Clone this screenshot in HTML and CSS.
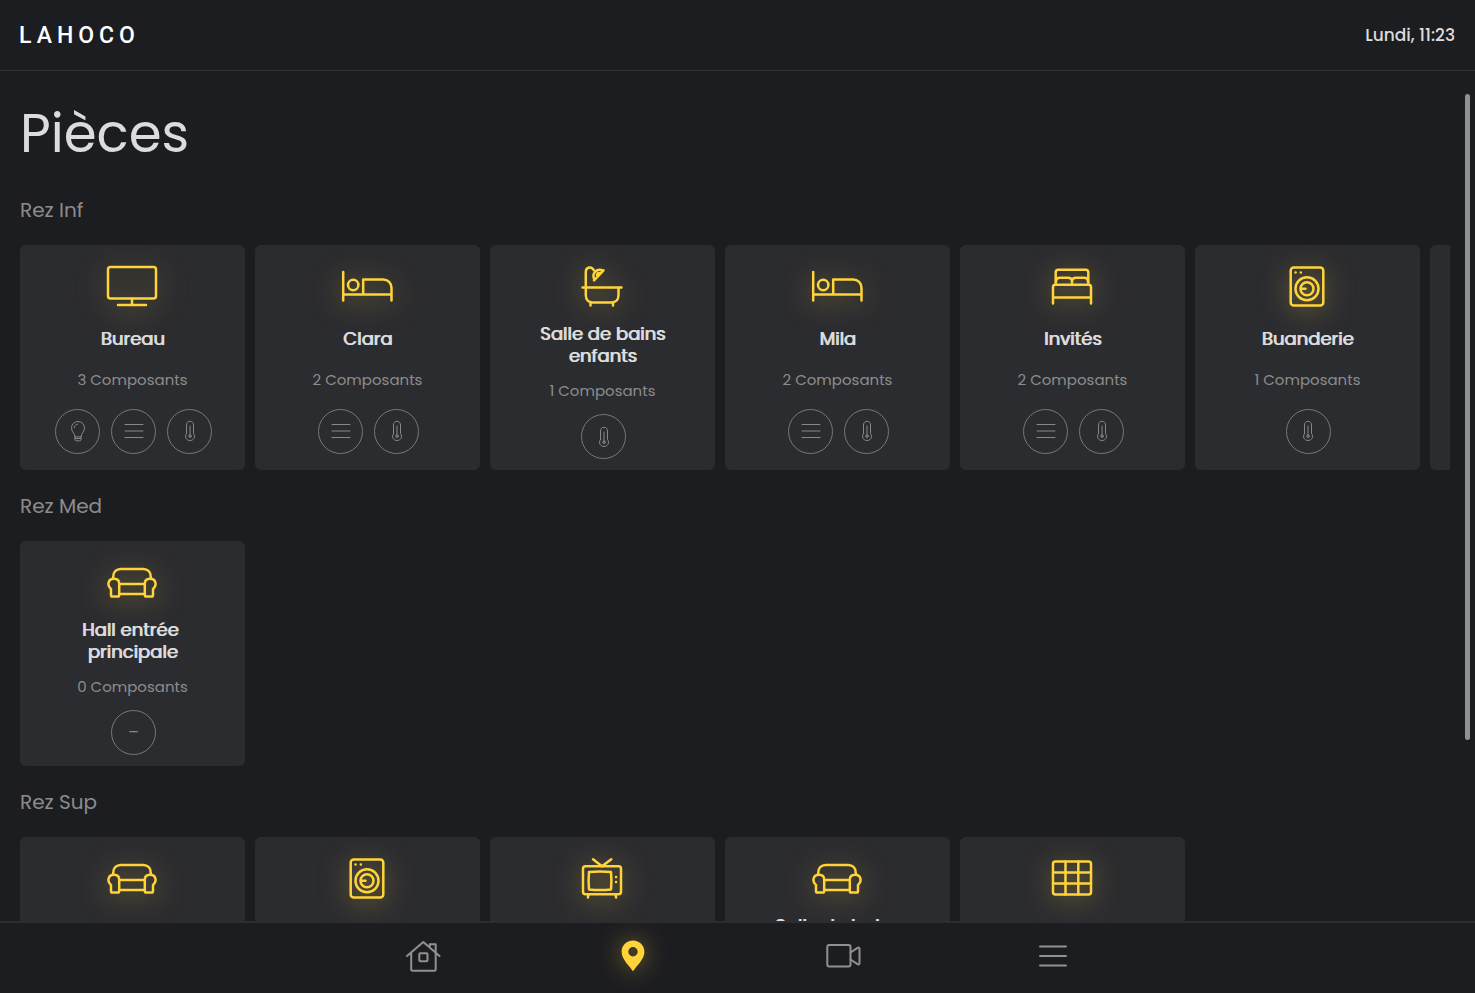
FILE: index.html
```html
<!DOCTYPE html>
<html lang="fr">

<head>
    <meta charset="UTF-8">
    <meta name="viewport" content="width=device-width, initial-scale=1">
    <title>Lahoco - Pièces</title>
    <link rel="stylesheet" href="styles.css">
</head>

<body>

    <!-- Icons -->
    <svg class="sprite" aria-hidden="true">
        <symbol id="monitor" viewBox="0 0 60 50">
            <rect x="6" y="6" width="48" height="31.5" rx="2.5" />
            <path d="M30 37.5V44M16 44h28" />
        </symbol>
        <symbol id="bed" viewBox="0 0 60 50">
            <path d="M6.2 11v28.500M54.500 39.500V27c0-5-3.500-8.500-8.500-8.500H26.200v15M6.200 33.500h48.300" />
            <circle cx="16.200" cy="24" r="5.200" />
        </symbol>
        <symbol id="bath" viewBox="0 0 60 50">
            <path d="M10.500 26.500h39M13.800 26.500V11c0-5.500 6-6 8-1.800M13.800 26.500V34c0 5 3 7.500 7 7.500h18.700c4.500 0 7-3 7-7.500v-7.500M18.500 41.500v3M41 41.500v3" />
            <path d="M31.500 9.300L22 19.300M22.200 18.500c-2.500-6 1.800-11.500 8.800-9M25.500 15.500c-1.500-2 .5-4.500 2.500-3" />
        </symbol>
        <symbol id="double-bed" viewBox="0 0 60 50">
            <path d="M13.700 23.700V11.500c0-1.700 1-2.700 2.700-2.700h27.200c1.700 0 2.700 1 2.700 2.700v12.200M11 42.500V26c0-1.500.8-2.300 2.300-2.300h33.400c1.500 0 2.300.8 2.300 2.300v16.500M11 36.500h38" />
            <path d="M14 21c0-3 1.500-4.300 4-4.300h8c2.500 0 4 1.300 4 4v3M30 23.700v-3c0-2.700 1.500-4 4-4h8c2.500 0 4 1.300 4 4.300" />
        </symbol>
        <symbol id="washer" viewBox="0 0 60 50">
            <rect x="13.700" y="6.500" width="32.600" height="38" rx="3" />
            <circle cx="30" cy="27.700" r="11.500" />
            <circle cx="30" cy="27.700" r="6.500" />
            <path d="M24 27.700h4.500M18.500 11.500h.1M23.800 11.500h.1" />
        </symbol>
        <symbol id="sofa" viewBox="0 0 60 50">
            <path d="M11.200 21.500V20c0-5 3-8 7.500-8h22.600c4.500 0 7.500 3 7.500 8v1.500M17.200 27h25.600M17.200 37h25.600" />
            <path d="M9 32c-4-3-3.500-10.300 3-10.300 3.500 0 5.200 2 5.200 5V38c0 1-.6 1.600-1.600 1.600H10.400C9.400 39.600 9 39 9 38zM51 32c4-3 3.500-10.300-3-10.300-3.500 0-5.200 2-5.200 5V38c0 1 .6 1.600 1.600 1.600h5.200c1 0 1.400-.6 1.400-1.600z" />
        </symbol>
        <symbol id="tv" viewBox="0 0 60 50">
            <rect x="11" y="13.300" width="38" height="28" rx="2.500" />
            <path d="M17 19q11-1 22 0 .8 9 0 17.500-11 1.200-22 0-.8-9 0-17.500zM21 6.200l9 7.100 9.300-7.100M16.500 41.500l-.6 3M43.500 41.500l.6 3M44 24h.1M44 29h.1" />
        </symbol>
        <symbol id="grid" viewBox="0 0 60 50">
            <rect x="11" y="8.500" width="38" height="33" rx="2.500" />
            <path d="M23.500 8.500v33M36.300 8.500v33M11 19.500h38M11 30.500h38" />
        </symbol>
        <symbol id="bulb" viewBox="0 0 24 24">
            <path d="M9 17.500c0-3-3.500-4.500-3.500-8.700a6.500 6.300 0 0 1 13 0c0 4.200-3.500 5.700-3.500 8.700zM9 17.500v3c0 .8.500 1.300 1.300 1.300h3.400c.8 0 1.300-.5 1.300-1.300v-3M9 19.500h6M8.300 8.800c0-2 1.400-3.500 3.400-3.700" />
        </symbol>
        <symbol id="lines" viewBox="0 0 24 24">
            <path d="M3 5.500h18M3 12h18M3 18.500h18" />
        </symbol>
        <symbol id="thermometer" viewBox="0 0 24 24">
            <path d="M8.500 14.500V6c0-5 7-5 7 0v8.500c2.500 3.500 0 7-3.500 7s-6-3.500-3.500-7zM12 7v10" />
            <circle cx="12" cy="17.200" r="1.300" />
        </symbol>
        <symbol id="home" viewBox="0 0 36 36">
            <path d="M2 17L18.300 3 34.500 17M6.200 13.500v16.700c0 1 .5 1.500 1.500 1.500h21.500c1 0 1.500-.5 1.500-1.500V5.200h-6v3.300" />
            <rect x="14.300" y="14.200" width="8.200" height="8" rx="1" />
        </symbol>
        <symbol id="pin" viewBox="0 0 36 36">
            <path d="M18 1.500c-6.500 0-11.400 5-11.400 11.200C6.600 20.500 15 27.500 18 32.300c3-4.800 11.400-11.800 11.400-19.600C29.400 6.500 24.500 1.500 18 1.500zm0 6.500a4.700 4.700 0 1 1 0 9.400 4.700 4.700 0 0 1 0-9.400z" />
        </symbol>
        <symbol id="camera" viewBox="0 0 36 36">
            <rect x="2.300" y="6" width="23.200" height="21.500" rx="2" />
            <path d="M25.500 13.500l7-4.600c1-.6 2-.3 2 .8v14.600c0 1.100-1 1.400-2 .8l-7-4.600" />
        </symbol>
        <symbol id="menu" viewBox="0 0 36 36">
            <path d="M5 7.500h26M5 17h26M5 26.500h26" />
        </symbol>
    </svg>

    <header class="topbar">
        <div class="logo">LAHOCO</div>
        <time class="clock">Lundi, 11:23</time>
    </header>

    <div class="content">
        <main class="scroller">
            <h1>Pièces</h1>

            <section>
                <h2>Rez Inf</h2>
                <div class="rooms">
                    <article class="room">
                        <svg class="room-icon"><use href="#monitor" /></svg>
                        <div class="room-body">
                            <h3>Bureau</h3>
                            <p>3 Composants</p>
                            <div class="components">
                                <span class="component"><svg><use href="#bulb" /></svg></span>
                                <span class="component"><svg><use href="#lines" /></svg></span>
                                <span class="component"><svg><use href="#thermometer" /></svg></span>
                            </div>
                        </div>
                    </article>
                    <article class="room">
                        <svg class="room-icon"><use href="#bed" /></svg>
                        <div class="room-body">
                            <h3>Clara</h3>
                            <p>2 Composants</p>
                            <div class="components">
                                <span class="component"><svg><use href="#lines" /></svg></span>
                                <span class="component"><svg><use href="#thermometer" /></svg></span>
                            </div>
                        </div>
                    </article>
                    <article class="room">
                        <svg class="room-icon"><use href="#bath" /></svg>
                        <div class="room-body">
                            <h3>Salle de bains<br>enfants</h3>
                            <p>1 Composants</p>
                            <div class="components">
                                <span class="component"><svg><use href="#thermometer" /></svg></span>
                            </div>
                        </div>
                    </article>
                    <article class="room">
                        <svg class="room-icon"><use href="#bed" /></svg>
                        <div class="room-body">
                            <h3>Mila</h3>
                            <p>2 Composants</p>
                            <div class="components">
                                <span class="component"><svg><use href="#lines" /></svg></span>
                                <span class="component"><svg><use href="#thermometer" /></svg></span>
                            </div>
                        </div>
                    </article>
                    <article class="room">
                        <svg class="room-icon"><use href="#double-bed" /></svg>
                        <div class="room-body">
                            <h3>Invités</h3>
                            <p>2 Composants</p>
                            <div class="components">
                                <span class="component"><svg><use href="#lines" /></svg></span>
                                <span class="component"><svg><use href="#thermometer" /></svg></span>
                            </div>
                        </div>
                    </article>
                    <article class="room">
                        <svg class="room-icon"><use href="#washer" /></svg>
                        <div class="room-body">
                            <h3>Buanderie</h3>
                            <p>1 Composants</p>
                            <div class="components">
                                <span class="component"><svg><use href="#thermometer" /></svg></span>
                            </div>
                        </div>
                    </article>
                    <article class="room"></article>
                </div>
            </section>

            <section>
                <h2>Rez Med</h2>
                <div class="rooms">
                    <article class="room">
                        <svg class="room-icon"><use href="#sofa" /></svg>
                        <div class="room-body">
                            <h3>Hall entrée&nbsp;<br>principale</h3>
                            <p>0 Composants</p>
                            <div class="components">
                                <span class="component">–</span>
                            </div>
                        </div>
                    </article>
                </div>
            </section>

            <section>
                <h2>Rez Sup</h2>
                <div class="rooms">
                    <article class="room">
                        <svg class="room-icon"><use href="#sofa" /></svg>
                    </article>
                    <article class="room">
                        <svg class="room-icon"><use href="#washer" /></svg>
                    </article>
                    <article class="room">
                        <svg class="room-icon"><use href="#tv" /></svg>
                    </article>
                    <article class="room">
                        <svg class="room-icon"><use href="#sofa" /></svg>
                        <div class="room-body">
                            <h3>Salle de bains<br>parents</h3>
                            <p>1 Composants</p>
                            <div class="components">
                                <span class="component"><svg><use href="#thermometer" /></svg></span>
                            </div>
                        </div>
                    </article>
                    <article class="room">
                        <svg class="room-icon"><use href="#grid" /></svg>
                    </article>
                </div>
            </section>
        </main>
        <div class="scroll-thumb"></div>
    </div>

    <nav class="tabbar">
        <div class="tabs">
            <a href="#" aria-label="Accueil"><svg><use href="#home" /></svg></a>
            <a href="#" class="active" aria-label="Pièces"><svg><use href="#pin" /></svg></a>
            <a href="#" aria-label="Caméras"><svg><use href="#camera" /></svg></a>
            <a href="#" aria-label="Menu"><svg><use href="#menu" /></svg></a>
        </div>
    </nav>

</body>

</html>
```

FILE: styles.css
```css
* {
    box-sizing: border-box;
}

body {
    margin: 0;
    height: 100vh;
    display: flex;
    flex-direction: column;
    overflow: hidden;
    background-color: #1c1d21;
    color: #dcdcdc;
    font-family: Poppins, Inter, sans-serif;
}

h1,
h2,
h3,
p {
    margin: 0;
    font-weight: 400;
}

svg {
    display: block;
    fill: none;
    stroke: currentColor;
    stroke-linecap: round;
    stroke-linejoin: round;
}

.sprite {
    position: absolute;
    width: 0;
    height: 0;
}

/* Header */
.topbar {
    flex: none;
    height: 71px;
    padding: 0 20px 0 19px;
    display: flex;
    align-items: center;
    justify-content: space-between;
    border-bottom: 1px solid #333;
}

.logo {
    font-family: Roboto, sans-serif;
    font-size: 23px;
    font-weight: 500;
    letter-spacing: 5px;
    color: #fff;
}

.clock {
    font-size: 17px;
    font-weight: 500;
}

/* Rooms */
.content {
    position: relative;
    flex: 1;
    min-height: 0;
}

.scroller {
    height: 100%;
    padding: 0 25px 20px 20px;
    overflow-y: auto;
    scrollbar-width: none;
}

.scroll-thumb {
    position: absolute;
    top: 23px;
    right: 5px;
    width: 5px;
    height: 76%;
    border-radius: 3px;
    background-color: #919191;
}

h1 {
    padding: 31px 0 8px;
    font-size: 53px;
    line-height: 64px;
}

h2 {
    padding: 21px 0 19px;
    font-size: 20px;
    line-height: 31px;
    color: #8c8c8c;
}

.rooms {
    display: flex;
    gap: 10px;
    overflow-x: auto;
    scrollbar-width: none;
}

.room {
    flex: none;
    width: 225px;
    height: 225px;
    padding-top: 16px;
    display: flex;
    flex-direction: column;
    align-items: center;
    border-radius: 6px;
    background-color: #2b2c30;
}

.room-icon {
    flex: none;
    width: 60px;
    height: 50px;
    margin: 0 1px 1px 0;
    color: #ffd43b;
    stroke-width: 2.5;
    filter: drop-shadow(0 4px 14px rgba(255, 212, 59, 0.5));
}

.room-body {
    flex: 1;
    display: flex;
    flex-direction: column;
    align-items: center;
    justify-content: space-evenly;
    text-align: center;
}

h3 {
    font-size: 18px;
    line-height: 22px;
    text-shadow: 1px 0 currentColor;
}

p {
    font-size: 15px;
    line-height: 26px;
    color: #8c8c8c;
}

.components {
    display: flex;
    gap: 11px;
    padding-left: 2px;
}

.component {
    width: 45px;
    height: 45px;
    display: flex;
    align-items: center;
    justify-content: center;
    border: 1px solid #777;
    border-radius: 50%;
    color: #888;
}

.component svg {
    width: 24px;
    height: 24px;
}

/* Bottom navigation */
.tabbar {
    flex: none;
    height: 72px;
    border-top: 2px solid #2c2d30;
}

.tabs {
    height: 100%;
    max-width: 840px;
    margin: 0 auto;
    padding-bottom: 2px;
    display: grid;
    grid-template-columns: repeat(4, 1fr);
}

.tabs a {
    display: flex;
    align-items: center;
    justify-content: center;
    color: #919191;
}

.tabs svg {
    width: 36px;
    height: 36px;
    stroke-width: 2;
}

.tabs .active {
    color: #ffd43b;
}

.tabs .active svg {
    fill: currentColor;
    stroke: none;
    filter: drop-shadow(0 0 12px rgba(255, 212, 59, 0.5));
}
```
